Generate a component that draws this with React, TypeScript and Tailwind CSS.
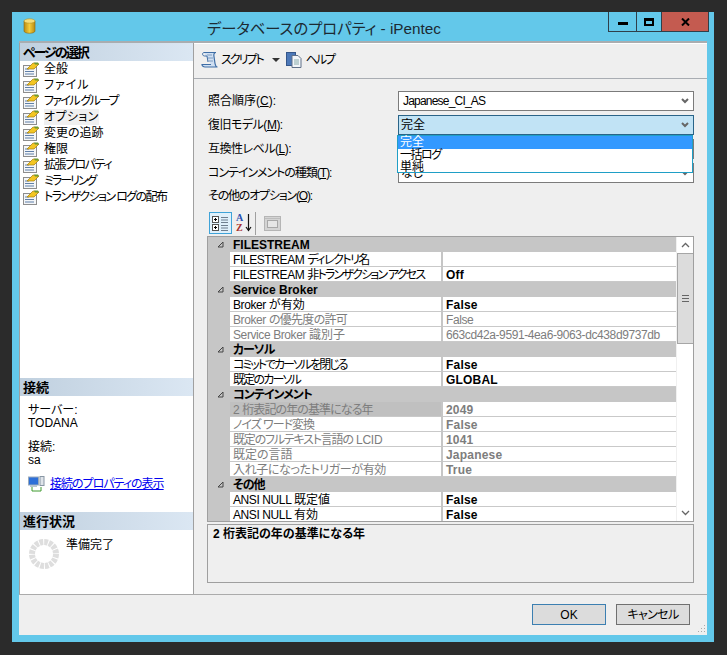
const F = "font-['Liberation_Sans','Noto_Sans_CJK_JP',sans-serif]";

function PageIcon() {
  return (
    <svg width="17" height="16" viewBox="0 0 17 16" className="shrink-0">
      <rect x="0.5" y="4.5" width="13" height="11" fill="#f4f6f8" stroke="#8d8d8d" />
      <path d="M2 8h4M2 10.500h9M2 13h9" stroke="#5f7fa8" />
      <path d="M4 8 10 2l6 1-5 5z" fill="#f3c623" stroke="#a37b10" strokeWidth="0.7" />
      <path d="M11 1.500h4l1 2h-4z" fill="#6f9a30" />
    </svg>
  );
}

function Chevron() {
  return (
    <svg width="8" height="6" viewBox="0 0 8 6" className="shrink-0">
      <path d="M1 1l3 3 3-3" fill="none" stroke="#666" strokeWidth="2" />
    </svg>
  );
}

function Combo({ text, active, cls }: { text: string; active?: boolean; cls?: string }) {
  return (
    <div className={`w-[296px] h-[20px] flex items-center justify-between pr-[4px] border text-[12px] ${cls ?? "pl-[2px]"} ${active ? "border-[#2a6488] bg-[#c1e3f5]" : "border-[#7b7b7b] bg-white"}`}>
      <span>{text}</span>
      <Chevron />
    </div>
  );
}

const nav: { n: string; t: string }[] = [
  { n: "全般", t: "" },
  { n: "ファイル", t: "tracking-[1px]" },
  { n: "ファイル グループ", t: "tracking-[-1.700px]" },
  { n: "オプション", t: "tracking-[0.4px]" },
  { n: "変更の追跡", t: "" },
  { n: "権限", t: "" },
  { n: "拡張プロパティ", t: "tracking-[-1.500px]" },
  { n: "ミラーリング", t: "tracking-[-2px]" },
  { n: "トランザクション ログの配布", t: "tracking-[-1.600px]" },
];

type Row = { p?: string; n: string; t?: string; v?: string; c?: boolean; d?: boolean; b?: boolean; sel?: boolean };
const rows: Row[] = [
  { n: "FILESTREAM", c: true },
  { p: "FILESTREAM ", n: "ディレクトリ名", t: "tracking-[-1.500px]", v: "" },
  { p: "FILESTREAM ", n: "非トランザクション アクセス", t: "tracking-[-1.800px]", v: "Off", b: true },
  { n: "Service Broker", c: true },
  { p: "Broker ", n: "が有効", v: "False", b: true },
  { p: "Broker ", n: "の優先度の許可", t: "tracking-[-0.7px]", v: "False", d: true },
  { p: "Service Broker ", n: "識別子", v: "663cd42a-9591-4ea6-9063-dc438d9737db", d: true },
  { n: "カーソル", t: "tracking-[-1px]", c: true },
  { n: "コミットでカーソルを閉じる", t: "tracking-[-2px]", v: "False", b: true },
  { n: "既定のカーソル", t: "tracking-[-1.800px]", v: "GLOBAL", b: true },
  { n: "コンテインメント", t: "tracking-[-1px]", c: true },
  { p: "2 ", n: "桁表記の年の基準になる年", t: "tracking-[-0.9px]", v: "2049", d: true, b: true, sel: true },
  { n: "ノイズ ワード変換", t: "tracking-[-1px]", v: "False", d: true, b: true },
  { n: "既定のフルテキスト言語の", t: "tracking-[-1.200px]", p: "", v: "1041", d: true, b: true },
  { n: "既定の言語", v: "Japanese", d: true, b: true },
  { n: "入れ子になったトリガーが有効", t: "tracking-[-0.4px]", v: "True", d: true, b: true },
  { n: "その他", t: "tracking-[-1px]", c: true },
  { p: "ANSI NULL ", n: "既定値", v: "False", b: true },
  { p: "ANSI NULL ", n: "有効", v: "False", b: true },
];

function SectionHeader({ text, cls }: { text: string; cls?: string }) {
  return (
    <div className={`h-[18px] flex items-center pl-[3px] font-bold text-[13px] bg-gradient-to-r from-[#c0d0df] to-[#dbe7f3] ${cls ?? ""}`}>{text}</div>
  );
}

function Spinner() {
  return (
    <svg width="30" height="30" viewBox="0 0 30 30">
      <circle cx="15" cy="15" r="12" fill="none" stroke="#dedede" strokeWidth="6" strokeDasharray="3.700 1" />
    </svg>
  );
}

export default function App() {
  return (
    <div className={`w-[727px] h-[655px] bg-[#2b2b2b] pt-[12px] pl-[12px] text-black ${F} [font-feature-settings:'palt'] text-[12px] leading-none overflow-hidden`}>
      <div className="w-[702px] h-[630px] bg-[#63c8ea] flex flex-col">
        <div className="h-[29px] flex shrink-0">
          <div className="w-[11px]" />
          <svg width="13" height="16" viewBox="0 0 13 16" className="mt-[6px]">
            <defs>
              <linearGradient id="g" x1="0" x2="1" y1="0" y2="0">
                <stop offset="0" stopColor="#b98a12" />
                <stop offset="0.5" stopColor="#f4cd3c" />
                <stop offset="1" stopColor="#b98a12" />
              </linearGradient>
            </defs>
            <path d="M1 3v10c0 3 11 3 11 0V3z" fill="url(#g)" stroke="#8a6a10" strokeWidth="0.6" />
            <ellipse cx="6.5" cy="3" rx="5.5" ry="2.2" fill="#f6dd77" stroke="#b4932a" strokeWidth="0.6" />
          </svg>
          <div className="ml-[171px] pt-[9px] text-[15.300px] text-[#1c2a33] whitespace-nowrap">データベースのプロパティ - iPentec</div>
          <div className="flex-1" />
          <div className="flex h-[20px] border-x border-b border-[#2f3f4a] mr-[5px]">
            <div className="w-[28px] flex items-center justify-center border-r border-[#2f3f4a]">
              <div className="w-[10px] h-[3px] bg-black mt-[3px]" />
            </div>
            <div className="w-[25px] flex items-center justify-center border-r border-[#2f3f4a]">
              <div className="w-[10px] h-[8px] border-2 border-t-[3px] border-black" />
            </div>
            <div className="w-[46px] bg-[#c45b50] flex items-center justify-center">
              <svg width="9" height="8" viewBox="0 0 9 8"><path d="M1 0.500l7 7M8 0.500l-7 7" stroke="#000" strokeWidth="2" /></svg>
            </div>
          </div>
        </div>

        <div className="mx-[7px] w-[688px] h-[594px] bg-[#efefef] border-t-2 border-[#a9adb0] flex flex-col">
          <div className="flex h-[552px] border-b border-[#ababab] shrink-0">
            <div className="w-[175px] bg-white border-r border-l border-[#a0a0a0] flex flex-col">
              <SectionHeader text="ページの選択" cls="tracking-[-2px]" />
              <div className="flex flex-col">
                {nav.map((i) => (
                  <div key={i.n} className="h-[16px] flex items-center pl-[3px] gap-[4px]">
                    <PageIcon />
                    <span className={`whitespace-nowrap ${i.t} ${i.n === "オプション" ? "bg-[#f0f0f0] h-[16px] flex items-center" : ""}`}>{i.n}</span>
                  </div>
                ))}
              </div>
              <div className="flex-1" />
              <SectionHeader text="接続" />
              <div className="h-[116px] pl-[8px] pt-[8px] shrink-0">
                <div className="leading-[13px]">サーバー:<br />TODANA</div>
                <div className="leading-[13px] mt-[11px]">接続:<br />sa</div>
                <div className="flex items-center mt-[9px] gap-[5px]">
                  <svg width="17" height="16" viewBox="0 0 17 16">
                    <rect x="0.5" y="1" width="10" height="8" fill="#2d6fd8" stroke="#9ab" />
                    <rect x="2" y="9" width="7" height="2" fill="#b8c4d0" />
                    <rect x="12" y="0.5" width="4" height="9" fill="#dfe4ea" stroke="#8896a4" />
                    <path d="M4 11v4h9v-4" fill="none" stroke="#3f9a2e" />
                  </svg>
                  <span className="text-[#0000f0] underline tracking-[-1px]">接続のプロパティの表示</span>
                </div>
              </div>
              <SectionHeader text="進行状況" />
              <div className="h-[64px] shrink-0 flex pl-[9px] pt-[9px] gap-[7px]">
                <Spinner />
                <span>準備完了</span>
              </div>
            </div>

            <div className="flex-1 flex flex-col">
              <div className="h-[36px] border-t border-t-white border-b border-b-[#a9adb3] flex items-center pl-[7px] pb-[3px] shrink-0">
                <svg width="17" height="18" viewBox="0 0 17 18">
                  <path d="M3 1.500h12c-2 0-2.500 2-2 4l1 7c.4 2 1 3.500 2.500 3.500H4c-1.500 0-3-1-3-2.500h9" fill="#cfdff2" stroke="#3f6ea6" strokeWidth="1.200" />
                  <path d="M3 1.500C1 1.500 1 5 3.500 5H6M6 5l1 6" fill="none" stroke="#3f6ea6" />
                  <path d="M6 4h5M7 7h5M7 10h5" stroke="#7f9cc0" />
                </svg>
                <span className="ml-[3px] tracking-[-2px]">スクリプト</span>
                <span className="ml-[9px] w-0 h-0 border-x-[4px] border-x-transparent border-t-[4px] border-t-[#333]" />
                <svg width="17" height="17" viewBox="0 0 17 17" className="ml-[6px]">
                  <rect x="0.500" y="1.500" width="9" height="13" fill="#4c78b8" stroke="#35568a" />
                  <path d="M6 4.500h6l3 3v9H6z" fill="#f2f5f9" stroke="#607089" />
                  <path d="M8 9h5M8 11h5M8 13h5" stroke="#8aa" />
                </svg>
                <span className="ml-[3px] tracking-[-2px]">ヘルプ</span>
              </div>

              <div className="flex-1 pl-[13px] pt-[12px] relative">
                <div className="flex items-center h-[20px] justify-between pr-[13px]"><span className="ml-[1px]">照合順序(<u>C</u>):</span><Combo text="Japanese_CI_AS" cls="pl-[4px] tracking-[-0.8px]" /></div>
                <div className="flex items-center h-[20px] justify-between pr-[13px] mt-[4px]"><span className="ml-[1px] tracking-[-0.5px]">復旧モデル(<u>M</u>):</span><Combo text="完全" active /></div>
                <div className="flex items-center h-[20px] justify-between pr-[13px] mt-[4px]"><span className="ml-[1px] tracking-[-0.5px]">互換性レベル(<u>L</u>):</span><Combo text="" /></div>
                <div className="flex items-center h-[20px] justify-between pr-[13px] mt-[4px]"><span className="ml-[1px] tracking-[-1px]">コンテインメントの種類(<u>T</u>):</span><Combo text="なし" /></div>
                <div className="mt-[7px] h-[13px] ml-[1px] tracking-[-1.200px]">その他のオプション(<u>O</u>):</div>

                <div className="absolute left-[203px] top-[56px] w-[296px] h-[38px] bg-white border border-[#1f9fc6] flex flex-col leading-[12px]">
                  <div className="h-[13px] bg-[#3399ff] text-white pl-[2px]">完全</div>
                  <div className="h-[12px] pl-[2px] tracking-[-1.500px]">一括ログ</div>
                  <div className="h-[11px] pl-[2px]">単純</div>
                </div>

                <div className="flex items-center h-[24px] mt-[8px] pl-[2px]">
                  <div className="w-[23px] h-[22px] border border-[#3fa3d8] bg-[#dff0fb] flex items-center justify-center">
                    <svg width="17" height="17" viewBox="0 0 17 17">
                      <rect x="0.500" y="1.500" width="6" height="6" fill="#fff" stroke="#555" />
                      <rect x="0.500" y="9.500" width="6" height="6" fill="#fff" stroke="#555" />
                      <path d="M2 4.500h3M3.500 3v3M2 12.500h3M3.500 11v3" stroke="#000" />
                      <path d="M9 2.500h7M9 5h7M9 7.500h7M9 10.500h7M9 13h7M9 15.500h7" stroke="#6f7f8f" />
                    </svg>
                  </div>
                  <svg width="20" height="20" viewBox="0 0 20 20" className="ml-[3px]">
                    <text x="1" y="8" fontSize="10" fontWeight="bold" fill="#2a4fb0" fontFamily="Liberation Serif">A</text>
                    <text x="1" y="18" fontSize="10" fontWeight="bold" fill="#a83030" fontFamily="Liberation Serif">Z</text>
                    <path d="M13.500 1v16M11 14l2.500 3.500L16 14" fill="none" stroke="#111" strokeWidth="1.200" />
                  </svg>
                  <div className="w-px h-[23px] bg-[#a0a0a0]" />
                  <svg width="17" height="15" viewBox="0 0 17 15" className="ml-[8px]">
                    <rect x="0.500" y="0.500" width="16" height="14" fill="#d4d4d4" stroke="#b5b5b5" />
                    <rect x="3.500" y="4.500" width="10" height="7" fill="#e6e6e6" stroke="#a8a8a8" />
                    <path d="M1 2.500h15" stroke="#bdbdbd" />
                  </svg>
                </div>

                <div className="w-[487px] h-[286px] mt-[1px] border border-[#9f9f9f] flex bg-white overflow-hidden">
                  <div className="w-[468px] flex flex-col shrink-0 overflow-hidden">
                    {rows.map((r) =>
                      r.c ? (
                        <div key={r.n} className="h-[15px] shrink-0 bg-[#c6c6c6] flex items-center font-bold text-[12px]">
                          <svg width="7" height="7" viewBox="0 0 7 7" className="ml-[9px] mr-[9px]">
                            <path d="M6 1v5H1z" fill="none" stroke="#444" />
                          </svg>
                          <span className={r.t}>{r.n}</span>
                        </div>
                      ) : (
                        <div key={r.n} className="h-[15px] shrink-0 flex bg-[#c6c6c6]">
                          <div className={`w-[211px] ml-[22px] pl-[3px] pt-[1px] flex items-center border-b border-[#c9c9c9] whitespace-pre overflow-hidden ${r.sel ? "bg-[#c0c0c0]" : "bg-white"} ${r.d ? "text-[#7d7d7d]" : ""}`}>
                            {r.p ? <span className="tracking-[-0.4px]">{r.p}</span> : null}
                            <span className={r.t}>{r.n}</span>
                            {r.n === "既定のフルテキスト言語の" ? <span className="tracking-[-0.2px]"> LCID</span> : null}
                          </div>
                          <div className={`flex-1 bg-white ml-[2px] pl-[3px] pt-[1px] flex items-center border-b border-[#c9c9c9] whitespace-nowrap ${r.b ? "font-bold tracking-[0.2px]" : "tracking-[-0.4px]"} ${r.d ? "text-[#7d7d7d]" : ""}`}>{r.v}</div>
                        </div>
                      )
                    )}
                  </div>
                  <div className="flex-1 flex flex-col border-l border-[#f0f0f0] bg-white">
                    <div className="h-[16px] flex items-center justify-center">
                      <svg width="9" height="6" viewBox="0 0 9 6"><path d="M1 5l3.500-3.500L8 5" fill="none" stroke="#666" strokeWidth="1.300" /></svg>
                    </div>
                    <div className="h-[91px] bg-[#dcdcdc] border-y border-l border-[#a6a6a6] flex items-center justify-center">
                      <div className="w-[7px] h-[7px] border-y-[1px] border-[#666] flex items-center"><div className="w-full h-px bg-[#666]" /></div>
                    </div>
                    <div className="flex-1" />
                    <div className="h-[16px] flex items-center justify-center">
                      <svg width="9" height="6" viewBox="0 0 9 6"><path d="M1 1l3.500 3.500L8 1" fill="none" stroke="#666" strokeWidth="1.300" /></svg>
                    </div>
                  </div>
                </div>

                <div className="w-[487px] h-[59px] mt-[2px] border border-[#9f9f9f] pl-[5px] pt-[3px] font-bold">2 桁表記の年の基準になる年</div>
              </div>
            </div>
          </div>

          <div className="flex-1 flex justify-end items-start pt-[9px] pr-[17px] gap-[10px] relative">
            <div className="w-[74px] h-[21px] border border-[#3c7fb1] bg-[#dcdcdc] flex items-center justify-center">OK</div>
            <div className="w-[74px] h-[21px] border border-[#707070] bg-[#dcdcdc] flex items-center justify-center tracking-[-0.6px]">キャンセル</div>
            <svg width="9" height="9" viewBox="0 0 9 9" className="absolute right-[1px] bottom-[2px]">
              <path d="M7 1h1v1H7zM4 4h1v1H4zM7 4h1v1H7zM1 7h1v1H1zM4 7h1v1H4zM7 7h1v1H7z" fill="#a9a9a9" />
            </svg>
          </div>
        </div>
      </div>
    </div>
  );
}
